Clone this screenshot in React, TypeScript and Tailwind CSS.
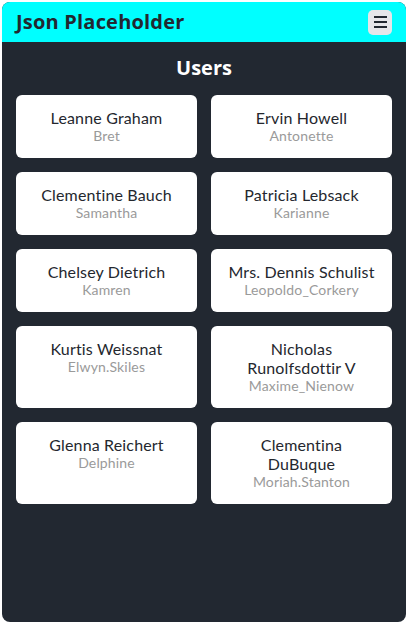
import React from "react";

const users = [
  { name: "Leanne Graham", username: "Bret" },
  { name: "Ervin Howell", username: "Antonette" },
  { name: "Clementine Bauch", username: "Samantha" },
  { name: "Patricia Lebsack", username: "Karianne" },
  { name: "Chelsey Dietrich", username: "Kamren" },
  { name: "Mrs. Dennis Schulist", username: "Leopoldo_Corkery" },
  { name: "Kurtis Weissnat", username: "Elwyn.Skiles" },
  { name: "Nicholas Runolfsdottir V", username: "Maxime_Nienow" },
  { name: "Glenna Reichert", username: "Delphine" },
  { name: "Clementina DuBuque", username: "Moriah.Stanton" },
];

export default function App() {
  return (
    <div className="bg-white p-[2px] h-[624px]" style={{ fontFamily: "Lato, 'Open Sans', sans-serif" }}>
      <div className="h-[620px] rounded-[8px] overflow-hidden bg-[#222831] flex flex-col">
        <header className="h-[40px] bg-[#00ffff] flex items-center justify-between pl-[14px] pr-[14px]">
          <h1 className="text-[20px] font-bold text-[#222831] leading-none font-['Open_Sans',sans-serif] tracking-[0.01em]">Json Placeholder</h1>
          <button className="w-[24px] h-[25px] rounded-[5px] bg-[#e6e6ea] flex flex-col items-center justify-center gap-[3px]">
            <span className="block w-[13px] h-[2px] bg-[#222831]" />
            <span className="block w-[13px] h-[2px] bg-[#222831]" />
            <span className="block w-[13px] h-[2px] bg-[#222831]" />
          </button>
        </header>
        <main className="px-[14px]">
          <h2 className="text-center text-white font-bold text-[20px] leading-[24px] mt-[14px] mb-[15px] font-['Open_Sans',sans-serif]">Users</h2>
          <div className="grid grid-cols-2 gap-[14px]">
            {users.map((u) => (
              <div key={u.name} className="bg-white rounded-[6px] px-[17px] pt-[13px] pb-[14px] text-center tracking-[0.01em]">
                <div className="text-[16px] leading-[19px] text-[#24272e]">{u.name}</div>
                <div className="text-[14px] leading-[17px] text-[#9a9a9a]">{u.username}</div>
              </div>
            ))}
          </div>
        </main>
      </div>
    </div>
  );
}
